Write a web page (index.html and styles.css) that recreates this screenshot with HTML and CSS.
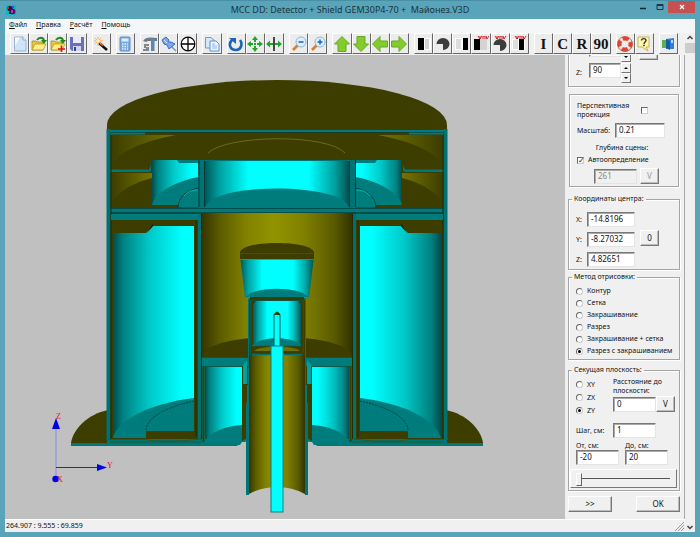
FILE: index.html
```html
<!DOCTYPE html>
<html lang="ru">
<head>
<meta charset="utf-8">
<title>MCC DD</title>
<link rel="stylesheet" href="styles.css">
</head>
<body>
<div class="window">
  <header class="titlebar">
    <svg class="app-icon" viewBox="0 0 10 10"><rect width="10" height="10" fill="#08b8c8"/><circle cx="4" cy="3.500" r="2.600" fill="#201040"/><circle cx="6.500" cy="6.500" r="2.800" fill="#401060"/><rect x="1" y="2" width="2" height="2" fill="#e02020"/><rect x="5" y="5" width="2" height="3" fill="#d030a0"/><rect x="6" y="1" width="2" height="2" fill="#3050e0"/><rect x="3" y="7" width="2" height="2" fill="#101010"/></svg>
    <h1 class="caption">MCC DD: Detector + Shield GEM30P4-70 +&nbsp; Майонез.V3D</h1>
    <div class="controls">
      <button class="ctl" aria-label="Свернуть"><svg viewBox="0 0 10 10"><path d="M2 6.500H8" stroke="#123" stroke-width="1.500"/></svg></button>
      <button class="ctl" aria-label="Развернуть"><svg viewBox="0 0 10 10"><path d="M2 2.500H8V7.500H2Z M2 3.500H8" fill="none" stroke="#234"/></svg></button>
      <button class="ctl close" aria-label="Закрыть"><svg viewBox="0 0 10 10"><path d="M3 3L7 7M7 3L3 7" stroke="#fff" stroke-width="1.300"/></svg></button>
    </div>
  </header>
  <nav class="menu">
    <a href="#"><u>Ф</u>айл</a><a href="#"><u>П</u>равка</a><a href="#"><u>Р</u>асчёт</a><a href="#"><u>П</u>омощь</a>
  </nav>
  <div class="client">
    <div class="content">
      <div class="toolbar">
        <div class="tools n4">
          <button aria-label="Новый"><svg viewBox="0 0 16 16"><path d="M2.500 1H11L14 4V15H2.500Z" fill="#cfe4f6" stroke="#9ab6d2"/><path d="M3 1.500H8L3 10Z" fill="#f4faff"/><path d="M11 1V4H14" fill="#fff" stroke="#8aa8c8"/></svg></button>
          <button aria-label="Открыть"><svg viewBox="0 0 16 16"><path d="M1 14V5H5L6 6H12V14Z" fill="#e8c840" stroke="#a08020" stroke-width=".7"/><path d="M1 14L4 8H15L12 14Z" fill="#ffef80" stroke="#b09020" stroke-width=".7"/><path d="M6 4C8 1 12 1 13 4" fill="none" stroke="#1f8a20" stroke-width="2"/><path d="M10 4H16L13 8Z" fill="#1f8a20"/></svg></button>
          <button aria-label="Добавить"><svg viewBox="0 0 16 16"><path d="M1 14V5H5L6 6H12V14Z" fill="#e8c840" stroke="#a08020" stroke-width=".7"/><path d="M1 14L4 8H15L12 14Z" fill="#ffef80" stroke="#b09020" stroke-width=".7"/><path d="M6 4C8 1 12 1 13 4" fill="none" stroke="#1f8a20" stroke-width="2"/><path d="M10 4H16L13 8Z" fill="#1f8a20"/><path d="M8 13H15M11.500 9.500V16" stroke="#e01010" stroke-width="1.600"/></svg></button>
          <button aria-label="Сохранить"><svg viewBox="0 0 16 16"><path d="M1 1H15V15H3L1 13Z" fill="#6a70b8"/><rect x="4" y="1" width="8" height="6" fill="#e8eaf8"/><rect x="4" y="10" width="8" height="5" fill="#d0d4ea"/><rect x="5" y="11" width="2" height="4" fill="#3a4090"/></svg></button>
        </div>
        <div class="tools n1">
          <button aria-label="Мастер"><svg viewBox="0 0 16 16"><path d="M6 7L14 14" stroke="#101010" stroke-width="2.400"/><path d="M7 7L10 9.500" stroke="#d06020" stroke-width="2"/><path d="M5 1V10M1 5H10M2 2L8 8M8 2L2 8" stroke="#f0b060" stroke-width="1"/><circle cx="5" cy="5" r="1.800" fill="#fff4b0"/></svg></button>
        </div>
        <div class="tools n1">
          <button aria-label="Расчёт"><svg viewBox="0 0 16 16"><rect x="3" y="1" width="10" height="14" rx="1" fill="#7cacdf" stroke="#5b8dc8"/><rect x="4.500" y="2.500" width="7" height="3" fill="#d9efff"/><path d="M5 8H11M5 10.500H11M5 13H11" stroke="#dceeff" stroke-width="1.400" stroke-dasharray="1.500 1"/></svg></button>
        </div>
        <div class="tools n3">
          <button aria-label="Инструменты"><svg viewBox="0 0 16 16"><path d="M1 5C3 1 8 1 15 2V5H6L4 6Z" fill="#687c90"/><rect x="9" y="3" width="3.500" height="12" fill="#5f86ac"/><path d="M2 8H7V10H4V11H7V15H1V13H4V12H2Z" fill="#85868a"/></svg></button>
          <button aria-label="Закрепить"><svg viewBox="0 0 16 16"><path d="M10 10L15 15" stroke="#8394ac" stroke-width="1.500"/><path d="M1 4L5 1L8 4L7 6L10 6L14 8L8 13L6 9L3 8Z" fill="#7ca7ea" stroke="#386dc4"/><path d="M3 4L6 7" stroke="#d6e6ff"/></svg></button>
          <button aria-label="Центр"><svg viewBox="0 0 16 16"><circle cx="8" cy="8" r="6.800" fill="#fff" stroke="#000" stroke-width="1.200"/><path d="M1 8H15M8 1V15" stroke="#000" stroke-width="1.300"/></svg></button>
        </div>
        <div class="tools n1">
          <button aria-label="Копировать"><svg viewBox="0 0 16 16"><path d="M1.500 1.500H7L10 4V12H1.500Z" fill="#d5e8fa" stroke="#739ccc"/><path d="M6 5H12L15 8V15H6Z" fill="#edf6ff" stroke="#5f90c8"/><path d="M8 8H11M8 10H13M8 12H13" stroke="#91b4dc"/></svg></button>
        </div>
        <div class="tools n3">
          <button aria-label="Повернуть"><svg viewBox="0 0 16 16"><path d="M4 4C0 8 2 14 8 14C13 14 15 8 12 4" fill="none" stroke="#1d63b7" stroke-width="2.600"/><path d="M1 2H8V8Z" fill="#1d63b7"/></svg></button>
          <button aria-label="Переместить"><svg viewBox="0 0 16 16"><path d="M8 0L5 4H11ZM8 16L5 12H11ZM0 8L4 5V11ZM16 8L12 5V11Z" fill="#22a52c"/><path d="M8 4V12M4 8H12" stroke="#22a52c" stroke-width="2" stroke-dasharray="2 1"/></svg></button>
          <button aria-label="Раздвинуть"><svg viewBox="0 0 16 16"><path d="M8 1V15" stroke="#111" stroke-width="1.500"/><path d="M0 8L4 4.500V7H7V9H4V11.500ZM16 8L12 4.500V7H9V9H12V11.500Z" fill="#22a52c"/></svg></button>
        </div>
        <div class="tools n2">
          <button aria-label="Уменьшить"><svg viewBox="0 0 16 16"><path d="M2 14L7 9" stroke="#d88030" stroke-width="2.800"/><circle cx="10" cy="6" r="5" fill="#d9f0ff" stroke="#90b5d8"/><path d="M7.500 6H12.500" stroke="#1f61b6" stroke-width="1.500"/></svg></button>
          <button aria-label="Увеличить"><svg viewBox="0 0 16 16"><path d="M2 14L7 9" stroke="#d88030" stroke-width="2.800"/><circle cx="10" cy="6" r="5" fill="#d9f0ff" stroke="#90b5d8"/><path d="M7.500 6H12.500M10 3.500V8.500" stroke="#1f61b6" stroke-width="1.500"/></svg></button>
        </div>
        <div class="tools n4 arrows">
          <button aria-label="Вверх"><svg viewBox="0 0 16 16"><path d="M8 .5L15.500 8H12V15.500H4V8H.5Z"/></svg></button>
          <button aria-label="Вниз"><svg viewBox="0 0 16 16"><path d="M8 15.500L.5 8H4V.5H12V8H15.500Z"/></svg></button>
          <button aria-label="Влево"><svg viewBox="0 0 16 16"><path d="M.5 8L8 .5V5H15.500V11H8V15.500Z"/></svg></button>
          <button aria-label="Вправо"><svg viewBox="0 0 16 16"><path d="M15.500 8L8 15.500V11H.5V5H8V.5Z"/></svg></button>
        </div>
        <div class="tools n6">
          <button aria-label="Левая половина"><svg viewBox="0 0 16 16"><rect x="2" y="2" width="13" height="12" fill="#fff"/><rect x="9" y="3" width="4" height="10" fill="#d4d4d4"/><rect x="2" y="2" width="6" height="12" fill="#000"/></svg></button>
          <button aria-label="Сектор"><svg viewBox="0 0 16 16"><path d="M8 8H1.500A6.500 6 0 1 1 8 14Z" fill="#3c3c3c"/></svg></button>
          <button aria-label="Правая половина"><svg viewBox="0 0 16 16"><rect x="1" y="2" width="13" height="12" fill="#fff"/><rect x="2" y="3" width="5" height="10" fill="#ddd"/><rect x="9" y="2" width="5" height="12" fill="#000"/></svg></button>
          <button aria-label="Левая половина, инверсия"><svg viewBox="0 0 16 16"><rect x="2" y="3" width="12" height="11" fill="#d4d4d4"/><rect x="1" y="3" width="6" height="11" fill="#000"/><path d="M5 0L7 3L9 0M7 0V3M10 3V0H12V3M13 0L14 3L16 0" fill="none" stroke="#d02020"/></svg></button>
          <button aria-label="Сектор, инверсия"><svg viewBox="0 0 16 16"><path d="M8 9H1.500A6.500 6 0 1 1 8 15Z" fill="#3c3c3c"/><path d="M3 0L5 3L7 0M5 0V3M8 3V0H10V3M11 0L12 3L14 0" fill="none" stroke="#d02020"/></svg></button>
          <button aria-label="Правая половина, инверсия"><svg viewBox="0 0 16 16"><rect x="1" y="3" width="13" height="11" fill="#fff"/><rect x="2" y="4" width="5" height="9" fill="#ddd"/><rect x="8" y="3" width="5" height="11" fill="#000"/><path d="M4 0L6 3L8 0M6 0V3M9 3V0H11V3M12 0L13 3L15 0" fill="none" stroke="#d02020"/></svg></button>
        </div>
        <div class="tools n4 letters"><button>I</button><button>C</button><button>R</button><button>90</button></div>
        <div class="tools n2">
          <button aria-label="Поддержка"><svg viewBox="0 0 16 16"><circle cx="8" cy="8" r="5.500" fill="none" stroke="#f0e4e0" stroke-width="4"/><circle cx="8" cy="8" r="5.500" fill="none" stroke="#e0452c" stroke-width="4" stroke-dasharray="6 2.640" stroke-dashoffset="3"/><circle cx="8" cy="8" r="7.500" fill="none" stroke="#c05040" stroke-width=".8"/></svg></button>
          <button aria-label="Справка"><svg viewBox="0 0 16 16"><path d="M2 1H13V11H10L12 15L6 11H2Z" fill="#fff8b0" stroke="#c8b458"/><path d="M5.500 4.500C5.500 2 10 2 10 4.500C10 6 8 6 8 8" fill="none" stroke="#333" stroke-width="1.400"/><rect x="7.200" y="8.800" width="1.600" height="1.400" fill="#333"/></svg></button>
        </div>
        <div class="tools n1">
          <button aria-label="Выход"><svg viewBox="0 0 16 16"><rect x="2" y="4" width="8" height="8" fill="#5fae50"/><path d="M6 3L14 2V13H6Z" fill="#2d7fd8"/><path d="M6 3L10 5V14L6 12Z" fill="#165aa8"/><path d="M11 4H13V7H11Z" fill="#a8dcff"/></svg></button>
        </div>
      </div>
      <div class="workspace">
        <main class="scene">
          <svg viewBox="5 55 560 464" preserveAspectRatio="xMidYMid meet">
            <defs>
              <linearGradient id="cyan-fade"><stop offset="0" stop-color="#004c4c"/><stop offset=".12" stop-color="#008080"/><stop offset=".45" stop-color="#00c8c8"/><stop offset=".85" stop-color="#00ffff"/></linearGradient>
              <linearGradient id="cyan-tube"><stop offset="0" stop-color="#005858"/><stop offset=".1" stop-color="#00a0a0"/><stop offset=".3" stop-color="#00ffff"/><stop offset=".72" stop-color="#00ffff"/><stop offset=".9" stop-color="#00a0a0"/><stop offset="1" stop-color="#005050"/></linearGradient>
              <linearGradient id="olive-tube"><stop offset="0" stop-color="#353500"/><stop offset=".12" stop-color="#5c5c00"/><stop offset=".3" stop-color="#828200"/><stop offset=".48" stop-color="#939300"/><stop offset=".68" stop-color="#808000"/><stop offset=".88" stop-color="#5a5a00"/><stop offset="1" stop-color="#333300"/></linearGradient>
              <linearGradient id="olive-fade"><stop offset="0" stop-color="#3d3d00"/><stop offset="1" stop-color="#747400"/></linearGradient>
              <g id="half">
                <path d="M71 443C73 429 88 414 108 410V444H71Z" fill="#3d3d00"/>
                <path d="M107 129H277V358H202V444H107Z" fill="#3d3d00"/>
                <path d="M111 135H176C144 141 115 152 111 169Z" fill="url(#olive-fade)"/>
                <path d="M111 173H152V178C128 184 112 197 111 206Z" fill="url(#olive-fade)"/>
                <path d="M107 129.500H277V132H145V134.500H111V132H107Z" fill="#087878"/>
                <path d="M107 129.500H277M110 132.500H277" stroke="#063c3c" stroke-width=".6"/>
                <path d="M110 169.500H149L151 165V171L149 172H110Z" fill="#007878"/>
                <rect x="152" y="160" width="47" height="45" fill="url(#cyan-fade)"/>
                <path d="M152 205C154 193 178 180 199 177V205Z" fill="#007c7c"/>
                <path d="M177 160H199V163H179Z" fill="#007c7c"/>
                <path d="M178 208C178 197 187 190 199 188V208Z" fill="#007c7c" stroke="#063030" stroke-width=".7"/>
                <path d="M184 196C188 191 193 190 198 190" fill="none" stroke="#00b8b8"/>
                <path d="M107 208H277V213H107Z" fill="#067878"/>
                <path d="M108 208.500H277M108 212.500H277" stroke="#053c3c" stroke-width=".7"/>
                <path d="M107.500 129V440M109.500 129V440" stroke="#007070" stroke-width="2"/>
                <path d="M111 135V440" stroke="#1a2a08"/>
                <path d="M111 214H200V220H111Z" fill="#007c7c"/>
                <path d="M113 233H146L153 226H194V431H146V438H113Z" fill="url(#cyan-fade)"/>
                <path d="M147 233L153 223V226Z" fill="#222200"/>
                <path d="M113 438C116 423 144 404 194 398V431H146V438Z" fill="#007c7c"/>
                <path d="M146 430C147 416 170 406 194 401" fill="none" stroke="#043838" stroke-width=".8" stroke-dasharray="2 1"/>
                <path d="M198 214H202V439H198Z" fill="#007070"/>
                <path d="M196 220V437M201.500 214V440" stroke="#202b00"/>
                <path d="M107 439H202V444H107Z" fill="#007878"/>
                <path d="M108 439.500H145L155 441H180L202 439M110 442H202" fill="none" stroke="#354c14" stroke-width=".7"/>
                <path d="M202 357H248V366H242V385H248V440L245 442L242 442L240 445H202Z" fill="#007c7c"/>
                <rect x="205" y="367" width="37" height="72" fill="url(#cyan-fade)"/>
                <path d="M205 441C211 431 227 426 242 425V441Z" fill="#007c7c"/>
                <path d="M242 385H247V438L242 441Z" fill="#3d3d00"/>
                <path d="M243 366Q244 362 247 361V384H243Z" fill="#00a0a0"/>
                <path d="M203.500 366V442" stroke="#3d3d00" stroke-width="2"/>
                <path d="M71 443H240L237 446H71Z" fill="#007878"/>
              </g>
            </defs>
            <rect x="240" y="357" width="74" height="80" fill="#3d3d00"/>
            <use href="#half"/>
            <use href="#half" transform="translate(554 0) scale(-1 1)"/>
            <path d="M107 129V125A170 45 0 0 1 447 125V129Z" fill="#3d3d00"/>
            <path d="M208 153C226 135 326 133 345 153" fill="none" stroke="#77771c" stroke-width=".8"/>
            <rect x="198" y="160" width="158" height="48" fill="#007474"/>
            <path d="M199 160V207M204.500 161V207M349.500 161V207M355.500 160V207" stroke="#033838"/>
            <rect x="205" y="161" width="144" height="47" fill="url(#cyan-tube)"/>
            <path d="M205 208C210 182 344 182 349 208Z" fill="#007c7c"/>
            <rect x="202" y="213" width="150" height="144" fill="url(#olive-tube)"/>
            <path d="M202 357C204 330 350 330 352 357Z" fill="#3d3d00"/>
            <path d="M202 357.500H352M204 366.500H242M312 366.500H350" stroke="#0a4a38" stroke-width=".7"/>
            <path d="M248 298H306V403H308V495H305V403H249V495H246V403H248Z" fill="#007474"/>
            <path d="M249 355H305V494Q292 487 277 487Q262 487 249 494Z" fill="url(#olive-tube)"/>
            <path d="M240 259V252C244 240 310 240 314 252V259Z" fill="#3d3d00"/>
            <path d="M240 253.500H313" stroke="#0a6464" stroke-width=".8"/>
            <path d="M240.500 260H313.500L309 298H245Z" fill="url(#cyan-tube)"/>
            <path d="M246 297C254 286 300 286 308 297Z" fill="#007c7c"/>
            <path d="M250 297H304V301H250Z" fill="#2e4200"/>
            <rect x="249" y="300" width="56" height="55" fill="#3d3d00"/>
            <path d="M250.500 300V355M303.500 300V355M251 300.500H303" stroke="#0a5858" stroke-width=".8"/>
            <path d="M253 304L256 301H298L301 304V345H253Z" fill="url(#cyan-tube)"/>
            <path d="M253 345C261 336 293 336 301 345Z" fill="#007c7c"/>
            <path d="M254 351C260 345 294 345 300 351Z" fill="#707000"/>
            <path d="M252 345.500H301M252 354.500H302" stroke="#007474" stroke-width="1.500"/>
            <path d="M274 315Q277 309 280 315V347H274Z" fill="#00ffff" stroke="#045c50"/>
            <path d="M273.500 315Q277 309 280.500 315Z" fill="#344000"/>
            <rect x="271" y="346" width="12" height="166" fill="#00ffff" stroke="#008080"/>
            <path d="M56 426V479" stroke="#8888ee"/>
            <path d="M56 467.500H98" stroke="#2424c0"/>
            <path d="M56 418L52 429H60ZM107 467.500L97 464V471Z" fill="#0000e8"/>
            <circle cx="55.500" cy="479" r="3.200" fill="#0000e8"/>
            <g class="axis"><text x="56" y="419">Z</text><text x="107" y="468">Y</text><text x="57" y="482">X</text></g>
          </svg>
        </main>
        <aside class="panel">
          <section class="group rotation">
            <div class="row"><span class="spin"><input aria-label="Поворот Y"><span class="steps"><button aria-label="Больше"></button><button aria-label="Меньше"><svg viewBox="0 0 8 8"><path d="M2 3H6L4 5Z"/></svg></button></span></span><button class="btn small" aria-label="Сброс"></button></div>
            <div class="row"><label for="rz">Z:</label><span class="spin"><input id="rz" value="90"><span class="steps"><button aria-label="Больше"><svg viewBox="0 0 8 8"><path d="M2 5H6L4 3Z"/></svg></button><button aria-label="Меньше"><svg viewBox="0 0 8 8"><path d="M2 3H6L4 5Z"/></svg></button></span></span></div>
          </section>
          <section class="group view">
            <div class="row persp"><label for="persp">Перспективная проекция</label><input type="checkbox" id="persp"></div>
            <div class="row scale"><label for="scale">Масштаб:</label><input id="scale" value="0.21"></div>
            <div class="depth">Глубина сцены:</div>
            <div class="row auto"><input type="checkbox" id="auto" checked><label for="auto">Автоопределение</label></div>
            <div class="row manual"><input aria-label="Глубина сцены" value="261" disabled><button class="btn small" disabled>V</button></div>
          </section>
          <fieldset class="group center">
            <legend>Координаты центра:</legend>
            <div class="coords">
              <label for="cx">X:</label><input id="cx" value="-14.8196">
              <label for="cy">Y:</label><input id="cy" value="-8.27032">
              <label for="cz">Z:</label><input id="cz" value="4.82651">
            </div>
            <button class="btn small">0</button>
          </fieldset>
          <fieldset class="group method">
            <legend>Метод отрисовки:</legend>
            <label><input type="radio" name="m">Контур</label>
            <label><input type="radio" name="m">Сетка</label>
            <label><input type="radio" name="m">Закрашивание</label>
            <label><input type="radio" name="m">Разрез</label>
            <label><input type="radio" name="m">Закрашивание + сетка</label>
            <label><input type="radio" name="m" checked>Разрез с закрашиванием</label>
          </fieldset>
          <fieldset class="group plane">
            <legend>Секущая плоскость:</legend>
            <div class="split">
              <div class="axes">
                <label><input type="radio" name="p">XY</label>
                <label><input type="radio" name="p">ZX</label>
                <label><input type="radio" name="p" checked>ZY</label>
              </div>
              <div class="distance">
                <label for="dist">Расстояние до<br>плоскости:</label>
                <div class="row"><input id="dist" value="0"><button class="btn small">V</button></div>
              </div>
            </div>
            <div class="row step"><label for="step">Шаг, см:</label><input id="step" value="1"></div>
            <div class="range">
              <label for="from">От, см:</label><label for="to">До, см:</label>
              <input id="from" value="-20"><input id="to" value="20">
            </div>
            <div class="slider"><input type="range" aria-label="Положение плоскости" min="-20" max="20" value="-20"></div>
          </fieldset>
          <div class="actions"><button class="btn">&gt;&gt;</button><button class="btn">OK</button></div>
        </aside>
      </div>
      <footer class="status"><span>264.907 : 9.555 : 69.859</span><svg viewBox="0 0 10 10"><path d="M1 10L10 1M4 10L10 4M7 10L10 7" stroke="#999"/></svg></footer>
    </div>
    <div class="scroll">
      <svg viewBox="0 0 10 10"><path d="M2.500 6L5 3.500L7.500 6" fill="none" stroke="#444" stroke-width="1.500"/></svg>
      <div class="thumb"></div>
      <svg viewBox="0 0 10 10"><path d="M2.500 4L5 6.500L7.500 4" fill="none" stroke="#444" stroke-width="1.500"/></svg>
    </div>
  </div>
</div>
</body>
</html>
```
FILE: styles.css
```css
* { box-sizing: border-box; }
body { margin: 0; font: 7px/10px "Noto Sans", "Liberation Sans", sans-serif; color: #111; }
button, input { font: inherit; color: inherit; margin: 0; padding: 0; border-radius: 0; min-width: 0; }
svg { display: block; }
.window { height: 100vh; display: flex; flex-direction: column; background: #5aa4ba; padding: 0 5px 5px; border: solid #4890a6; border-width: 1px 0 0; }

.titlebar { display: grid; grid-template-columns: 60px 1fr 60px; align-items: center; height: 18px; flex: none; }
.app-icon { width: 10px; height: 10px; margin-left: 1px; }
.caption { margin: 0; font: 400 9px/16px "Noto Sans", sans-serif; text-align: center; color: #173440; white-space: nowrap; }
.controls { display: flex; justify-content: flex-end; align-self: start; }
.ctl { flex: 1; height: 12px; border: 0; background: none; display: flex; justify-content: center; align-items: center; }
.ctl svg { width: 10px; height: 10px; }
.ctl.close { flex: none; width: 27px; background: #c75050; }

.menu { display: flex; gap: 9px; height: 14px; flex: none; padding: 1px 4px; background: #f5f6f7; }
.menu a { color: #111; text-decoration: none; }

.client { flex: 1; min-height: 0; display: flex; background: #f0f0f0; }
.content { flex: 1; min-width: 0; display: flex; flex-direction: column; }
.scroll { width: 10px; display: flex; flex-direction: column; background: #f0f0f0; }
.scroll svg { width: 10px; height: 10px; }
.thumb { height: 10px; background: #cdcdcd; margin-bottom: auto; }

.toolbar { display: flex; gap: 5px; padding: 0 7px 0 5px; height: 22px; flex: none; }
.tools { display: flex; height: 21px; }
.n1 { flex: 1 1 0; }
.n2 { flex: 2 1 0; }
.n3 { flex: 3 1 0; }
.n4 { flex: 4 1 0; }
.n6 { flex: 6 1 0; }
.tools button { flex: 1 1 0; display: flex; align-items: center; justify-content: center; background: #ececec; border: 1px solid; border-color: #fff #696969 #696969 #fff; }
.tools svg { width: 16px; height: 16px; flex: none; }
.arrows path { fill: #84cc2c; stroke: #68a828; stroke-width: 1; }
.tools.letters button { font: bold 15px/18px "Liberation Serif", serif; }

.workspace { flex: 1; min-height: 0; display: grid; grid-template-columns: minmax(0, 1fr) 120px; }
.scene { background: #c0c0c0; min-height: 0; }
.scene svg { width: 100%; height: 100%; }
.axis { font: 8px "Liberation Serif", serif; fill: #e01030; }

.panel { display: flex; flex-direction: column; justify-content: flex-end; gap: 7px; min-height: 0; overflow: hidden; padding: 0 4px 7px 3px; border-right: 1px solid #a8a8a8; }
.panel > * { flex: none; }
.group { margin: 0; min-width: 0; border: 1px solid #a5a5a5; box-shadow: inset 1px 1px #fff, 1px 1px #fff; }
fieldset.group { padding: 0 7px; }
legend { padding: 0 2px; margin-left: -4px; }
.row { display: flex; align-items: center; }
.panel input:not([type]) { width: 43px; height: 15px; padding: 0 3px 2px; font-size: 8px; background: #fff; border: 1px solid; border-color: #777 #e4e4e4 #e4e4e4 #777; box-shadow: inset 1px 1px #aaa; }
.panel input:disabled { color: #888; background: #f0f0f0; }
.btn { width: 44px; height: 16px; font-size: 8px; background: #f0f0f0; border: 1px solid; border-color: #fff #777 #777 #fff; box-shadow: inset -1px -1px #bbb; text-align: center; }
.btn.small { width: 19px; }
.btn:disabled { color: #999; }
input[type="checkbox"], input[type="radio"] { appearance: none; flex: none; width: 7px; height: 7px; background: #fff; border: 1px solid; border-color: #666 #ccc #ccc #666; display: grid; place-items: center; }
input[type="radio"] { border-radius: 50%; }
input[type="radio"]:checked::before { content: ""; width: 3px; height: 3px; border-radius: 50%; background: #000; }
input[type="checkbox"]:checked::before { content: "✓"; font: bold 8px/6px "DejaVu Sans", sans-serif; }

.rotation { padding: 0 7px 2px; }
.rotation .row { height: 20px; margin-bottom: 1px; }
.rotation .row:first-child { padding-left: 13px; }
.rotation label { width: 13px; }
.spin { display: flex; margin-right: 8px; }
.panel .spin input { width: 32px; }
.steps { display: flex; flex-direction: column; }
.steps button { width: 10px; height: 10px; background: #f0f0f0; border: 1px solid; border-color: #fff #777 #777 #fff; }
.steps svg { width: 8px; height: 8px; }

.view { padding: 6px 7px 2px; margin-right: 1px; margin-left: 1px; }
.persp label { width: 64px; line-height: 9px; }
.scale { margin-top: 4px; gap: 6px; }
.scale label { width: 32px; }
.panel .scale input:not([type]) { width: 50px; }
.depth { text-align: center; margin-top: 5px; padding-right: 4px; }
.auto { gap: 4px; margin: 2px 0 3px; }
.manual { gap: 3px; padding-left: 17px; }

fieldset.center { display: flex; align-items: center; gap: 5px; height: 76px; padding-top: 4px; }
.coords { display: grid; grid-template-columns: 11px 48px; row-gap: 5px; align-items: center; padding-top: 4px; }
.panel .coords input:not([type]) { width: 48px; }

.method { margin-top: -5px; }
.plane { margin-top: -2px; }
.method label, .axes label { display: flex; align-items: center; gap: 4px; height: 12px; white-space: nowrap; }
fieldset.method { padding: 3px 7px 2px; }

fieldset.plane { padding-right: 4px; }
.split { display: flex; justify-content: space-between; padding-top: 1px; }
.axes { width: 27px; padding-top: 2px; }
.axes label { height: 13px; }
.distance label { display: block; line-height: 9px; margin: 1px 0; }
.step { margin-top: 6px; }
.step label { width: 37px; }
.range { display: grid; grid-template-columns: 43px 43px; column-gap: 6px; margin-top: 3px; }
.range label { line-height: 9px; }
.slider { height: 19px; margin: 4px -2px 2px -6px; padding: 2px 5px; border: 1px solid; border-color: #fff #777 #777 #fff; }
.slider input { appearance: none; display: block; width: 94px; height: 14px; background: linear-gradient(#555, #555) 0 6px / 100% 1px no-repeat; }
.slider input::-webkit-slider-thumb { appearance: none; width: 6px; height: 13px; background: #f0f0f0; border: 1px solid; border-color: #fff #666 #666 #fff; }
.actions { display: flex; justify-content: space-between; margin-top: -2px; }

.status { display: flex; justify-content: space-between; align-items: center; height: 13px; flex: none; padding: 0 1px; border-top: 1px solid #fff; }
.status svg { width: 10px; height: 10px; }
```
